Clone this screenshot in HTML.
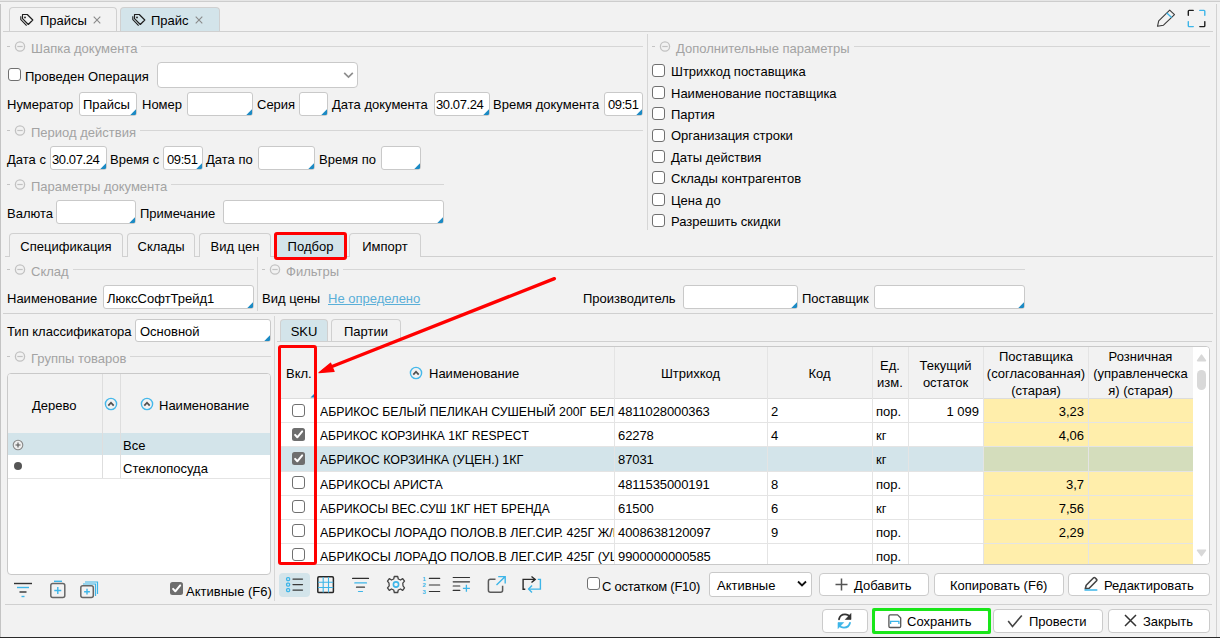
<!DOCTYPE html>
<html><head><meta charset="utf-8"><style>
html,body{margin:0;padding:0;}
body{width:1220px;height:638px;overflow:hidden;background:#f2f2f2;position:relative;font-family:"Liberation Sans",sans-serif;font-size:13px;color:#000;}
body>div,body>svg{position:absolute;}
.t{line-height:15px;white-space:nowrap;}
</style></head><body>
<div style="left:0px;top:1px;width:1220px;height:1px;background:#cdcdcd"></div>
<div style="left:0px;top:0px;width:1220px;height:1px;background:#e6e6e6"></div>
<div style="left:0px;top:4px;width:1px;height:633px;background:#c4c4c4"></div>
<div style="left:1216px;top:4px;width:1px;height:633px;background:#d2d2d2"></div>
<div style="left:0px;top:637px;width:1220px;height:1px;background:#2a2a2a"></div>
<div style="left:9px;top:7px;width:108px;height:25px;background:#f2f2f2;border:1px solid #d0d0d0;border-bottom:none;border-radius:4px 4px 0 0;box-sizing:border-box"></div>
<div style="left:120px;top:7px;width:100px;height:25px;background:#d3e4ea;border:1px solid #d0d0d0;border-bottom:none;border-radius:4px 4px 0 0;box-sizing:border-box"></div>
<div style="left:3px;top:31px;width:1210px;height:1px;background:#d0d0d0"></div>
<svg style="left:20px;top:13px" width="14" height="13" viewBox="0 0 14 13"><path d="M2.5 1.5 H7.3 L12.8 7 L8.3 11.5 L2.5 5.7 Z" fill="none" stroke="#1d1d1d" stroke-width="1.15" stroke-linejoin="round"/><path d="M0.8 3.2 V6.6 L6.6 12.6" fill="none" stroke="#1d1d1d" stroke-width="1.1"/><circle cx="5" cy="4.4" r="0.9" fill="#1d1d1d"/></svg>
<div class="t" style="left:40px;top:13px;">Прайсы</div>
<svg style="left:132px;top:13px" width="14" height="13" viewBox="0 0 14 13"><path d="M2.5 1.5 H7.3 L12.8 7 L8.3 11.5 L2.5 5.7 Z" fill="none" stroke="#1d1d1d" stroke-width="1.15" stroke-linejoin="round"/><path d="M0.8 3.2 V6.6 L6.6 12.6" fill="none" stroke="#1d1d1d" stroke-width="1.1"/><circle cx="5" cy="4.4" r="0.9" fill="#1d1d1d"/></svg>
<div class="t" style="left:151px;top:13px;">Прайс</div>
<svg style="left:93px;top:16px" width="8" height="8" viewBox="0 0 8 8"><path d="M0.7 0.7 L7.3 7.3 M7.3 0.7 L0.7 7.3" stroke="#8a8a8a" stroke-width="1.1"/></svg>
<svg style="left:195px;top:16px" width="8" height="8" viewBox="0 0 8 8"><path d="M0.7 0.7 L7.3 7.3 M7.3 0.7 L0.7 7.3" stroke="#8a8a8a" stroke-width="1.1"/></svg>
<svg style="left:1150px;top:5px" width="30" height="25" viewBox="0 0 30 25"><path d="M7.5 21.3 L8.7 15.8 L19.7 5.2 L24.5 9.6 L13.5 20.2 Z" fill="none" stroke="#3a3a3a" stroke-width="1.1" stroke-linejoin="round"/><path d="M16.8 7.9 L21.6 12.6" stroke="#3db5e8" stroke-width="1.4"/></svg>
<svg style="left:1185px;top:5px" width="25" height="25" viewBox="0 0 25 25"><g fill="none" stroke-width="1.4" stroke-linecap="round" stroke-linejoin="round"><path d="M3.3 10.2 V6.2 Q3.3 5.4 4.1 5.4 H8.2" stroke="#1e1e1e"/><path d="M14.8 5.4 H19 Q19.8 5.4 19.8 6.2 V10.3" stroke="#3db5e8"/><path d="M3.3 16.6 V20.8 Q3.3 21.6 4.1 21.6 H8.3" stroke="#3db5e8"/><path d="M14.8 21.6 H19 Q19.8 21.6 19.8 20.8 V16.6" stroke="#1e1e1e"/></g></svg>
<div style="left:7px;top:46px;width:3px;height:1px;background:#c4c4c4"></div>
<svg style="left:14px;top:41px" width="12" height="12" viewBox="0 0 12 12"><circle cx="6" cy="5.5" r="4.6" fill="none" stroke="#c2c2c2" stroke-width="1.3"/><line x1="3.3" y1="5.5" x2="8.7" y2="5.5" stroke="#c2c2c2" stroke-width="1.2"/></svg>
<div class="t" style="left:31px;top:41px;color:#a3a3a3">Шапка документа</div>
<div style="left:141px;top:46px;width:502px;height:1px;background:#d6d6d6"></div>
<div style="left:8px;top:68px;width:13px;height:13px;background:#fff;border:1.2px solid #707070;border-radius:3px;box-sizing:border-box"></div>
<div class="t" style="left:25px;top:69px;">Проведен Операция</div>
<div style="left:157px;top:62px;width:201px;height:26px;background:#fff;border:1px solid #c9c9c9;border-radius:4px;box-sizing:border-box"></div>
<svg style="left:343px;top:71px" width="11" height="8" viewBox="0 0 11 8"><path d="M1.2 1.8 L5.5 6 L9.8 1.8" fill="none" stroke="#8e8e8e" stroke-width="1.7"/></svg>
<div class="t" style="left:7px;top:97px;">Нумератор</div>
<div style="left:79px;top:92px;width:58px;height:24px;background:#fff;border:1px solid #c9c9c9;border-radius:3px;box-sizing:border-box"></div>
<svg style="left:129px;top:108px" width="8" height="8" viewBox="0 0 8 8"><path d="M7 1.3 L7 5.8 Q7 7 5.8 7 L1.3 7 Z" fill="#1b8ac4"/></svg>
<div class="t" style="left:83px;top:97px;">Прайсы</div>
<div class="t" style="left:142px;top:97px;">Номер</div>
<div style="left:187px;top:92px;width:66px;height:24px;background:#fff;border:1px solid #c9c9c9;border-radius:3px;box-sizing:border-box"></div>
<svg style="left:245px;top:108px" width="8" height="8" viewBox="0 0 8 8"><path d="M7 1.3 L7 5.8 Q7 7 5.8 7 L1.3 7 Z" fill="#1b8ac4"/></svg>
<div class="t" style="left:257px;top:97px;">Серия</div>
<div style="left:299px;top:92px;width:29px;height:24px;background:#fff;border:1px solid #c9c9c9;border-radius:3px;box-sizing:border-box"></div>
<svg style="left:320px;top:108px" width="8" height="8" viewBox="0 0 8 8"><path d="M7 1.3 L7 5.8 Q7 7 5.8 7 L1.3 7 Z" fill="#1b8ac4"/></svg>
<div class="t" style="left:332px;top:97px;">Дата документа</div>
<div style="left:434px;top:92px;width:56px;height:24px;background:#fff;border:1px solid #c9c9c9;border-radius:3px;box-sizing:border-box"></div>
<svg style="left:482px;top:108px" width="8" height="8" viewBox="0 0 8 8"><path d="M7 1.3 L7 5.8 Q7 7 5.8 7 L1.3 7 Z" fill="#1b8ac4"/></svg>
<div class="t" style="left:436px;top:97px;letter-spacing:-0.4px">30.07.24</div>
<div class="t" style="left:493px;top:97px;">Время документа</div>
<div style="left:604px;top:92px;width:39px;height:24px;background:#fff;border:1px solid #c9c9c9;border-radius:3px;box-sizing:border-box"></div>
<svg style="left:635px;top:108px" width="8" height="8" viewBox="0 0 8 8"><path d="M7 1.3 L7 5.8 Q7 7 5.8 7 L1.3 7 Z" fill="#1b8ac4"/></svg>
<div class="t" style="left:608px;top:97px;letter-spacing:-0.4px">09:51</div>
<div style="left:7px;top:130px;width:3px;height:1px;background:#c4c4c4"></div>
<svg style="left:14px;top:125px" width="12" height="12" viewBox="0 0 12 12"><circle cx="6" cy="5.5" r="4.6" fill="none" stroke="#c2c2c2" stroke-width="1.3"/><line x1="3.3" y1="5.5" x2="8.7" y2="5.5" stroke="#c2c2c2" stroke-width="1.2"/></svg>
<div class="t" style="left:31px;top:125px;color:#a3a3a3">Период действия</div>
<div style="left:140px;top:130px;width:503px;height:1px;background:#d6d6d6"></div>
<div class="t" style="left:7px;top:152px;">Дата с</div>
<div style="left:50px;top:146px;width:57px;height:24px;background:#fff;border:1px solid #c9c9c9;border-radius:3px;box-sizing:border-box"></div>
<svg style="left:99px;top:162px" width="8" height="8" viewBox="0 0 8 8"><path d="M7 1.3 L7 5.8 Q7 7 5.8 7 L1.3 7 Z" fill="#1b8ac4"/></svg>
<div class="t" style="left:52px;top:152px;letter-spacing:-0.4px">30.07.24</div>
<div class="t" style="left:110px;top:152px;">Время с</div>
<div style="left:163px;top:146px;width:40px;height:24px;background:#fff;border:1px solid #c9c9c9;border-radius:3px;box-sizing:border-box"></div>
<svg style="left:195px;top:162px" width="8" height="8" viewBox="0 0 8 8"><path d="M7 1.3 L7 5.8 Q7 7 5.8 7 L1.3 7 Z" fill="#1b8ac4"/></svg>
<div class="t" style="left:167px;top:152px;letter-spacing:-0.4px">09:51</div>
<div class="t" style="left:206px;top:152px;">Дата по</div>
<div style="left:258px;top:146px;width:57px;height:24px;background:#fff;border:1px solid #c9c9c9;border-radius:3px;box-sizing:border-box"></div>
<svg style="left:307px;top:162px" width="8" height="8" viewBox="0 0 8 8"><path d="M7 1.3 L7 5.8 Q7 7 5.8 7 L1.3 7 Z" fill="#1b8ac4"/></svg>
<div class="t" style="left:319px;top:152px;">Время по</div>
<div style="left:381px;top:146px;width:40px;height:24px;background:#fff;border:1px solid #c9c9c9;border-radius:3px;box-sizing:border-box"></div>
<svg style="left:413px;top:162px" width="8" height="8" viewBox="0 0 8 8"><path d="M7 1.3 L7 5.8 Q7 7 5.8 7 L1.3 7 Z" fill="#1b8ac4"/></svg>
<div style="left:7px;top:184px;width:3px;height:1px;background:#c4c4c4"></div>
<svg style="left:14px;top:179px" width="12" height="12" viewBox="0 0 12 12"><circle cx="6" cy="5.5" r="4.6" fill="none" stroke="#c2c2c2" stroke-width="1.3"/><line x1="3.3" y1="5.5" x2="8.7" y2="5.5" stroke="#c2c2c2" stroke-width="1.2"/></svg>
<div class="t" style="left:31px;top:179px;color:#a3a3a3">Параметры документа</div>
<div style="left:171px;top:184px;width:273px;height:1px;background:#d6d6d6"></div>
<div class="t" style="left:7px;top:206px;">Валюта</div>
<div style="left:56px;top:200px;width:80px;height:24px;background:#fff;border:1px solid #c9c9c9;border-radius:3px;box-sizing:border-box"></div>
<svg style="left:128px;top:216px" width="8" height="8" viewBox="0 0 8 8"><path d="M7 1.3 L7 5.8 Q7 7 5.8 7 L1.3 7 Z" fill="#1b8ac4"/></svg>
<div class="t" style="left:140px;top:206px;">Примечание</div>
<div style="left:223px;top:200px;width:221px;height:24px;background:#fff;border:1px solid #c9c9c9;border-radius:3px;box-sizing:border-box"></div>
<svg style="left:436px;top:216px" width="8" height="8" viewBox="0 0 8 8"><path d="M7 1.3 L7 5.8 Q7 7 5.8 7 L1.3 7 Z" fill="#1b8ac4"/></svg>
<div style="left:647px;top:34px;width:1px;height:196px;background:#d6d6d6"></div>
<div style="left:652px;top:46px;width:3px;height:1px;background:#c4c4c4"></div>
<svg style="left:659px;top:41px" width="12" height="12" viewBox="0 0 12 12"><circle cx="6" cy="5.5" r="4.6" fill="none" stroke="#c2c2c2" stroke-width="1.3"/><line x1="3.3" y1="5.5" x2="8.7" y2="5.5" stroke="#c2c2c2" stroke-width="1.2"/></svg>
<div class="t" style="left:676px;top:41px;color:#a3a3a3">Дополнительные параметры</div>
<div style="left:854px;top:46px;width:356px;height:1px;background:#d6d6d6"></div>
<div style="left:652px;top:64px;width:13px;height:13px;background:#fff;border:1.2px solid #707070;border-radius:3px;box-sizing:border-box"></div>
<div class="t" style="left:671px;top:64px;">Штрихкод поставщика</div>
<div style="left:652px;top:86px;width:13px;height:13px;background:#fff;border:1.2px solid #707070;border-radius:3px;box-sizing:border-box"></div>
<div class="t" style="left:671px;top:86px;">Наименование поставщика</div>
<div style="left:652px;top:107px;width:13px;height:13px;background:#fff;border:1.2px solid #707070;border-radius:3px;box-sizing:border-box"></div>
<div class="t" style="left:671px;top:107px;">Партия</div>
<div style="left:652px;top:129px;width:13px;height:13px;background:#fff;border:1.2px solid #707070;border-radius:3px;box-sizing:border-box"></div>
<div class="t" style="left:671px;top:128px;">Организация строки</div>
<div style="left:652px;top:150px;width:13px;height:13px;background:#fff;border:1.2px solid #707070;border-radius:3px;box-sizing:border-box"></div>
<div class="t" style="left:671px;top:150px;">Даты действия</div>
<div style="left:652px;top:171px;width:13px;height:13px;background:#fff;border:1.2px solid #707070;border-radius:3px;box-sizing:border-box"></div>
<div class="t" style="left:671px;top:171px;">Склады контрагентов</div>
<div style="left:652px;top:193px;width:13px;height:13px;background:#fff;border:1.2px solid #707070;border-radius:3px;box-sizing:border-box"></div>
<div class="t" style="left:671px;top:193px;">Цена до</div>
<div style="left:652px;top:214px;width:13px;height:13px;background:#fff;border:1.2px solid #707070;border-radius:3px;box-sizing:border-box"></div>
<div class="t" style="left:671px;top:214px;">Разрешить скидки</div>
<div style="left:5px;top:256px;width:1208px;height:1px;background:#d0d0d0"></div>
<div style="left:9px;top:233px;width:114px;height:24px;background:#f2f2f2;border:1px solid #d0d0d0;border-bottom:none;border-radius:4px 4px 0 0;box-sizing:border-box"></div>
<div class="t" style="left:9px;width:114px;text-align:center;top:239px;">Спецификация</div>
<div style="left:127px;top:233px;width:68px;height:24px;background:#f2f2f2;border:1px solid #d0d0d0;border-bottom:none;border-radius:4px 4px 0 0;box-sizing:border-box"></div>
<div class="t" style="left:127px;width:68px;text-align:center;top:239px;">Склады</div>
<div style="left:199px;top:233px;width:72px;height:24px;background:#f2f2f2;border:1px solid #d0d0d0;border-bottom:none;border-radius:4px 4px 0 0;box-sizing:border-box"></div>
<div class="t" style="left:199px;width:72px;text-align:center;top:239px;">Вид цен</div>
<div style="left:276px;top:233px;width:69px;height:24px;background:#d3e4ea;border:1px solid #d0d0d0;border-bottom:none;border-radius:4px 4px 0 0;box-sizing:border-box"></div>
<div style="left:349px;top:233px;width:72px;height:24px;background:#f2f2f2;border:1px solid #d0d0d0;border-bottom:none;border-radius:4px 4px 0 0;box-sizing:border-box"></div>
<div class="t" style="left:349px;width:72px;text-align:center;top:239px;">Импорт</div>
<div class="t" style="left:277px;width:67px;text-align:center;top:239px;">Подбор</div>
<div style="left:274px;top:232px;width:73px;height:28px;border:3px solid #ff0000;border-radius:3px;box-sizing:border-box"></div>
<div style="left:7px;top:269px;width:3px;height:1px;background:#c4c4c4"></div>
<svg style="left:14px;top:264px" width="12" height="12" viewBox="0 0 12 12"><circle cx="6" cy="5.5" r="4.6" fill="none" stroke="#c2c2c2" stroke-width="1.3"/><line x1="3.3" y1="5.5" x2="8.7" y2="5.5" stroke="#c2c2c2" stroke-width="1.2"/></svg>
<div class="t" style="left:31px;top:264px;color:#a3a3a3">Склад</div>
<div style="left:73px;top:269px;width:181px;height:1px;background:#d6d6d6"></div>
<div style="left:257px;top:257px;width:1px;height:54px;background:#d6d6d6"></div>
<div style="left:262px;top:269px;width:3px;height:1px;background:#c4c4c4"></div>
<svg style="left:269px;top:264px" width="12" height="12" viewBox="0 0 12 12"><circle cx="6" cy="5.5" r="4.6" fill="none" stroke="#c2c2c2" stroke-width="1.3"/><line x1="3.3" y1="5.5" x2="8.7" y2="5.5" stroke="#c2c2c2" stroke-width="1.2"/></svg>
<div class="t" style="left:286px;top:264px;color:#a3a3a3">Фильтры</div>
<div style="left:343px;top:269px;width:682px;height:1px;background:#d6d6d6"></div>
<div class="t" style="left:7px;top:291px;">Наименование</div>
<div style="left:103px;top:285px;width:151px;height:24px;background:#fff;border:1px solid #c9c9c9;border-radius:3px;box-sizing:border-box"></div>
<svg style="left:246px;top:301px" width="8" height="8" viewBox="0 0 8 8"><path d="M7 1.3 L7 5.8 Q7 7 5.8 7 L1.3 7 Z" fill="#1b8ac4"/></svg>
<div class="t" style="left:107px;top:291px;">ЛюксСофтТрейд1</div>
<div class="t" style="left:262px;top:291px;">Вид цены</div>
<div class="t" style="left:328px;top:291px;color:#5aafd8;text-decoration:underline">Не определено</div>
<div class="t" style="left:583px;top:291px;">Производитель</div>
<div style="left:683px;top:285px;width:115px;height:24px;background:#fff;border:1px solid #c9c9c9;border-radius:3px;box-sizing:border-box"></div>
<svg style="left:790px;top:301px" width="8" height="8" viewBox="0 0 8 8"><path d="M7 1.3 L7 5.8 Q7 7 5.8 7 L1.3 7 Z" fill="#1b8ac4"/></svg>
<div class="t" style="left:802px;top:291px;">Поставщик</div>
<div style="left:874px;top:285px;width:151px;height:24px;background:#fff;border:1px solid #c9c9c9;border-radius:3px;box-sizing:border-box"></div>
<svg style="left:1017px;top:301px" width="8" height="8" viewBox="0 0 8 8"><path d="M7 1.3 L7 5.8 Q7 7 5.8 7 L1.3 7 Z" fill="#1b8ac4"/></svg>
<div style="left:3px;top:313px;width:1210px;height:1px;background:#d0d0d0"></div>
<div class="t" style="left:7px;top:324px;">Тип классификатора</div>
<div style="left:135px;top:319px;width:136px;height:23px;background:#fff;border:1px solid #c9c9c9;border-radius:3px;box-sizing:border-box"></div>
<svg style="left:263px;top:334px" width="8" height="8" viewBox="0 0 8 8"><path d="M7 1.3 L7 5.8 Q7 7 5.8 7 L1.3 7 Z" fill="#1b8ac4"/></svg>
<div class="t" style="left:140px;top:324px;">Основной</div>
<div style="left:274px;top:316px;width:1px;height:285px;background:#d6d6d6"></div>
<div style="left:7px;top:356px;width:3px;height:1px;background:#c4c4c4"></div>
<svg style="left:14px;top:351px" width="12" height="12" viewBox="0 0 12 12"><circle cx="6" cy="5.5" r="4.6" fill="none" stroke="#c2c2c2" stroke-width="1.3"/><line x1="3.3" y1="5.5" x2="8.7" y2="5.5" stroke="#c2c2c2" stroke-width="1.2"/></svg>
<div class="t" style="left:31px;top:351px;color:#a3a3a3">Группы товаров</div>
<div style="left:130px;top:356px;width:141px;height:1px;background:#d6d6d6"></div>
<div style="left:7px;top:373px;width:264px;height:202px;background:#fff;border:1px solid #c9c9c9;border-radius:4px;box-sizing:border-box"></div>
<div style="left:8px;top:374px;width:262px;height:59px;background:#f2f2f2;border-radius:3px 3px 0 0"></div>
<div style="left:8px;top:433px;width:262px;height:22px;background:#d3e4ea"></div>
<div style="left:8px;top:478px;width:262px;height:1px;background:#e4e4e4"></div>
<div style="left:102px;top:374px;width:1px;height:104px;background:#dedede"></div>
<div style="left:120px;top:374px;width:1px;height:104px;background:#dedede"></div>
<div class="t" style="left:32px;top:398px;">Дерево</div>
<svg style="left:104px;top:396.5px" width="14" height="14" viewBox="0 0 14 14"><circle cx="7" cy="7" r="5.6" fill="none" stroke="#45b8ea" stroke-width="1.4"/><path d="M4.3 8.6 L7 5.7 L9.7 8.6" fill="none" stroke="#505050" stroke-width="1.75"/></svg>
<svg style="left:139.5px;top:396.5px" width="14" height="14" viewBox="0 0 14 14"><circle cx="7" cy="7" r="5.6" fill="none" stroke="#45b8ea" stroke-width="1.4"/><path d="M4.3 8.6 L7 5.7 L9.7 8.6" fill="none" stroke="#505050" stroke-width="1.75"/></svg>
<div class="t" style="left:159px;top:398px;">Наименование</div>
<svg style="left:12px;top:439px" width="12" height="12" viewBox="0 0 12 12"><circle cx="6" cy="6" r="4.8" fill="#eee" stroke="#888" stroke-width="1.1"/><path d="M3.5 6 H8.5 M6 3.5 V8.5" stroke="#555" stroke-width="1.1"/></svg>
<div class="t" style="left:123px;top:438px;">Все</div>
<svg style="left:13px;top:461px" width="10" height="10" viewBox="0 0 10 10"><circle cx="5" cy="5" r="4" fill="#555"/></svg>
<div class="t" style="left:123px;top:461px;">Стеклопосуда</div>
<svg style="left:13px;top:582px" width="20" height="17" viewBox="0 0 20 17"><path d="M1 1.5 H19" stroke="#333" stroke-width="1.4"/><path d="M4 5.5 H16" stroke="#3db5e8" stroke-width="1.4"/><path d="M6.5 10 H13.5" stroke="#333" stroke-width="1.4"/><path d="M8.5 14.5 H11.5" stroke="#3db5e8" stroke-width="1.4"/></svg>
<svg style="left:49px;top:580px" width="18" height="19" viewBox="0 0 18 19"><path d="M5 1.3 H13" stroke="#3db5e8" stroke-width="1.4"/><rect x="1.8" y="3.5" width="14" height="14" rx="2" fill="none" stroke="#666" stroke-width="1.5"/><path d="M8.8 7 V14 M5.3 10.5 H12.3" stroke="#3db5e8" stroke-width="1.4"/></svg>
<svg style="left:79px;top:580px" width="21" height="19" viewBox="0 0 21 19"><path d="M6 2 H18.5 V14" fill="none" stroke="#3db5e8" stroke-width="1.2"/><path d="M4 4 H16.5 V16" fill="none" stroke="#3db5e8" stroke-width="1.2"/><rect x="1.8" y="5.8" width="12.5" height="11.8" rx="2" fill="#f2f2f2" stroke="#666" stroke-width="1.5"/><path d="M8 8.8 V14.6 M5.1 11.7 H10.9" stroke="#3db5e8" stroke-width="1.4"/></svg>
<div style="left:170px;top:582px;width:13px;height:13px;background:#6e6e6e;border-radius:2.5px"></div>
<svg style="left:170px;top:582px" width="13" height="13" viewBox="0 0 13 13"><path d="M3.1 6.9 L5.3 9.3 L10.2 3.4" fill="none" stroke="#fff" stroke-width="2" stroke-linecap="round" stroke-linejoin="round"/></svg>
<div class="t" style="left:186px;top:584px;">Активные (F6)</div>
<div style="left:280px;top:319px;width:48px;height:23px;background:#d3e4ea;border:1px solid #d0d0d0;border-bottom:none;border-radius:4px 4px 0 0;box-sizing:border-box"></div>
<div class="t" style="left:280px;width:48px;text-align:center;top:324px;">SKU</div>
<div style="left:331px;top:319px;width:70px;height:23px;background:#f2f2f2;border:1px solid #d0d0d0;border-bottom:none;border-radius:4px 4px 0 0;box-sizing:border-box"></div>
<div class="t" style="left:331px;width:70px;text-align:center;top:324px;">Партии</div>
<div style="left:277px;top:341px;width:935px;height:1px;background:#d0d0d0"></div>
<div style="left:278px;top:346px;width:932px;height:219px;background:#fff;border:1px solid #c9c9c9;border-radius:4px;box-sizing:border-box;overflow:hidden"></div>
<div style="left:279px;top:347px;width:914px;height:51px;background:#f2f2f2;border-radius:3px 0 0 0"></div>
<div style="left:279px;top:398px;width:914px;height:1px;background:#dcdcdc"></div>
<div style="left:984px;top:399px;width:209px;height:165px;background:#ffeeab"></div>
<div style="left:279px;top:446.9px;width:706px;height:24.2px;background:#d3e4ea"></div>
<div style="left:984px;top:446.9px;width:209px;height:24.2px;background:#d4ddbc"></div>
<div style="left:279px;top:422.2px;width:914px;height:1px;background:#e4e4e4"></div>
<div style="left:279px;top:446.4px;width:914px;height:1px;background:#e4e4e4"></div>
<div style="left:279px;top:470.6px;width:914px;height:1px;background:#e4e4e4"></div>
<div style="left:279px;top:494.8px;width:914px;height:1px;background:#e4e4e4"></div>
<div style="left:279px;top:519.0px;width:914px;height:1px;background:#e4e4e4"></div>
<div style="left:279px;top:543.2px;width:914px;height:1px;background:#e4e4e4"></div>
<div style="left:315px;top:347px;width:1px;height:217px;background:#e4e4e4"></div>
<div style="left:614px;top:347px;width:1px;height:217px;background:#e4e4e4"></div>
<div style="left:767px;top:347px;width:1px;height:217px;background:#e4e4e4"></div>
<div style="left:872px;top:347px;width:1px;height:217px;background:#e4e4e4"></div>
<div style="left:908px;top:347px;width:1px;height:217px;background:#e4e4e4"></div>
<div style="left:983px;top:347px;width:1px;height:217px;background:#e4e4e4"></div>
<div style="left:1088px;top:347px;width:1px;height:217px;background:#e4e4e4"></div>
<div class="t" style="left:286px;top:366px;">Вкл.</div>
<svg style="left:409px;top:366px" width="14" height="14" viewBox="0 0 14 14"><circle cx="7" cy="7" r="5.6" fill="none" stroke="#45b8ea" stroke-width="1.4"/><path d="M4.3 8.6 L7 5.7 L9.7 8.6" fill="none" stroke="#505050" stroke-width="1.75"/></svg>
<div class="t" style="left:429px;top:366px;">Наименование</div>
<div class="t" style="left:614px;width:153px;text-align:center;top:366px;">Штрихкод</div>
<div class="t" style="left:767px;width:105px;text-align:center;top:366px;">Код</div>
<div class="t" style="left:872px;width:36px;text-align:center;top:357.5px;">Ед.</div>
<div class="t" style="left:872px;width:36px;text-align:center;top:374.5px;">изм.</div>
<div class="t" style="left:908px;width:75px;text-align:center;top:357.5px;">Текущий</div>
<div class="t" style="left:908px;width:75px;text-align:center;top:374.5px;">остаток</div>
<div class="t" style="left:984px;width:104px;text-align:center;top:349px;">Поставщика</div>
<div class="t" style="left:984px;width:104px;text-align:center;top:366px;">(согласованная)</div>
<div class="t" style="left:984px;width:104px;text-align:center;top:383px;">(старая)</div>
<div class="t" style="left:1088px;width:105px;text-align:center;top:349px;">Розничная</div>
<div class="t" style="left:1088px;width:105px;text-align:center;top:366px;">(управленческа</div>
<div class="t" style="left:1088px;width:105px;text-align:center;top:383px;">я) (старая)</div>
<svg style="left:310px;top:393px" width="5" height="5" viewBox="0 0 5 5"><path d="M4.5 0.5 V4.5 H0.5 Z" fill="#1b8ac4"/></svg>
<div style="left:292px;top:404px;width:13px;height:13px;background:#fff;border:1.2px solid #707070;border-radius:3px;box-sizing:border-box"></div>
<div class="t" style="left:320px;top:404px;width:294px;overflow:hidden"><span style="display:inline-block;transform:scaleX(0.946);transform-origin:0 0">АБРИКОС БЕЛЫЙ ПЕЛИКАН СУШЕНЫЙ 200Г БЕЛЫЙ</span></div>
<div class="t" style="left:618px;top:404px;letter-spacing:-0.1px">4811028000363</div>
<div class="t" style="left:771px;top:404px;">2</div>
<div class="t" style="left:876px;top:404px;">пор.</div>
<div class="t" style="left:679px;width:300px;text-align:right;top:404px;">1 099</div>
<div class="t" style="left:784px;width:300px;text-align:right;top:404px;">3,23</div>
<div style="left:292px;top:428px;width:13px;height:13px;background:#6e6e6e;border-radius:2.5px"></div>
<svg style="left:292px;top:428px" width="13" height="13" viewBox="0 0 13 13"><path d="M3.1 6.9 L5.3 9.3 L10.2 3.4" fill="none" stroke="#fff" stroke-width="2" stroke-linecap="round" stroke-linejoin="round"/></svg>
<div class="t" style="left:320px;top:428px;width:294px;overflow:hidden"><span style="display:inline-block;transform:scaleX(0.928);transform-origin:0 0">АБРИКОС КОРЗИНКА 1КГ RESPECT</span></div>
<div class="t" style="left:618px;top:428px;letter-spacing:-0.1px">62278</div>
<div class="t" style="left:771px;top:428px;">4</div>
<div class="t" style="left:876px;top:428px;">кг</div>
<div class="t" style="left:784px;width:300px;text-align:right;top:428px;">4,06</div>
<div style="left:292px;top:452px;width:13px;height:13px;background:#6e6e6e;border-radius:2.5px"></div>
<svg style="left:292px;top:452px" width="13" height="13" viewBox="0 0 13 13"><path d="M3.1 6.9 L5.3 9.3 L10.2 3.4" fill="none" stroke="#fff" stroke-width="2" stroke-linecap="round" stroke-linejoin="round"/></svg>
<div class="t" style="left:320px;top:452px;width:294px;overflow:hidden"><span style="display:inline-block;transform:scaleX(0.96);transform-origin:0 0">АБРИКОС КОРЗИНКА (УЦЕН.) 1КГ</span></div>
<div class="t" style="left:618px;top:452px;letter-spacing:-0.1px">87031</div>
<div class="t" style="left:771px;top:452px;"></div>
<div class="t" style="left:876px;top:452px;">кг</div>
<div style="left:292px;top:476px;width:13px;height:13px;background:#fff;border:1.2px solid #707070;border-radius:3px;box-sizing:border-box"></div>
<div class="t" style="left:320px;top:477px;width:294px;overflow:hidden"><span style="display:inline-block;transform:scaleX(0.951);transform-origin:0 0">АБРИКОСЫ АРИСТА</span></div>
<div class="t" style="left:618px;top:477px;letter-spacing:-0.1px">4811535000191</div>
<div class="t" style="left:771px;top:477px;">8</div>
<div class="t" style="left:876px;top:477px;">пор.</div>
<div class="t" style="left:784px;width:300px;text-align:right;top:477px;">3,7</div>
<div style="left:292px;top:500px;width:13px;height:13px;background:#fff;border:1.2px solid #707070;border-radius:3px;box-sizing:border-box"></div>
<div class="t" style="left:320px;top:501px;width:294px;overflow:hidden"><span style="display:inline-block;transform:scaleX(0.926);transform-origin:0 0">АБРИКОСЫ ВЕС.СУШ 1КГ НЕТ БРЕНДА</span></div>
<div class="t" style="left:618px;top:501px;letter-spacing:-0.1px">61500</div>
<div class="t" style="left:771px;top:501px;">6</div>
<div class="t" style="left:876px;top:501px;">кг</div>
<div class="t" style="left:784px;width:300px;text-align:right;top:501px;">7,56</div>
<div style="left:292px;top:524px;width:13px;height:13px;background:#fff;border:1.2px solid #707070;border-radius:3px;box-sizing:border-box"></div>
<div class="t" style="left:320px;top:525px;width:294px;overflow:hidden"><span style="display:inline-block;transform:scaleX(0.962);transform-origin:0 0">АБРИКОСЫ ЛОРАДО ПОЛОВ.В ЛЕГ.СИР. 425Г Ж/Б</span></div>
<div class="t" style="left:618px;top:525px;letter-spacing:-0.1px">4008638120097</div>
<div class="t" style="left:771px;top:525px;">9</div>
<div class="t" style="left:876px;top:525px;">пор.</div>
<div class="t" style="left:784px;width:300px;text-align:right;top:525px;">2,29</div>
<div style="left:292px;top:548px;width:13px;height:13px;background:#fff;border:1.2px solid #707070;border-radius:3px;box-sizing:border-box"></div>
<div class="t" style="left:320px;top:549px;width:294px;overflow:hidden"><span style="display:inline-block;transform:scaleX(0.962);transform-origin:0 0">АБРИКОСЫ ЛОРАДО ПОЛОВ.В ЛЕГ.СИР. 425Г (УЦЕН.)</span></div>
<div class="t" style="left:618px;top:549px;letter-spacing:-0.1px">9900000000585</div>
<div class="t" style="left:771px;top:549px;"></div>
<div class="t" style="left:876px;top:549px;">пор.</div>
<div style="left:1193px;top:347px;width:16px;height:217px;background:#fff;border-radius:0 3px 3px 0"></div>
<svg style="left:1195px;top:353px" width="13" height="10" viewBox="0 0 13 10"><path d="M2.6 7.6 L6.5 2.2 L10.4 7.6 Z" fill="#d8d8d8" stroke="#d8d8d8" stroke-width="1.6" stroke-linejoin="round"/></svg>
<div style="left:1197px;top:370px;width:9px;height:20px;background:#d9d9d9;border-radius:4.5px"></div>
<svg style="left:1195px;top:548px" width="13" height="10" viewBox="0 0 13 10"><path d="M2.6 2.2 L6.5 7.6 L10.4 2.2 Z" fill="#d8d8d8" stroke="#d8d8d8" stroke-width="1.6" stroke-linejoin="round"/></svg>
<div style="left:278px;top:345px;width:39px;height:220px;border:3px solid #ff0000;border-radius:3px;box-sizing:border-box"></div>
<svg style="left:300px;top:260px" width="270" height="130" viewBox="0 0 270 130"><line x1="254.4" y1="18.6" x2="32" y2="106.5" stroke="#ff0000" stroke-width="3.3" stroke-linecap="round"/><path d="M19 112.6 L30.6 103.2 L34.1 111.4 Z" fill="#ff0000" stroke="#ff0000" stroke-width="1.2" stroke-linejoin="round"/></svg>
<div style="left:279px;top:573px;width:31px;height:24px;background:#d3e4ea;border-radius:4px"></div>
<svg style="left:282px;top:572px" width="24" height="22" viewBox="0 0 24 22"><g fill="none" stroke="#3db5e8" stroke-width="1.3"><rect x="4.6" y="5.6" width="3" height="3" rx="1"/><rect x="4.6" y="11.1" width="3" height="3" rx="1"/><rect x="4.6" y="16.6" width="3" height="3" rx="1"/></g><path d="M11 7.1 H20.5 M11 12.6 H20.5 M11 18.1 H20.5" stroke="#3a3a3a" stroke-width="1.3" stroke-linecap="round"/></svg>
<svg style="left:314px;top:573px" width="22" height="22" viewBox="0 0 22 22"><rect x="3.8" y="3.8" width="15.6" height="15.8" rx="1.2" fill="none" stroke="#262626" stroke-width="1.5"/><path d="M9.2 4 V19.4 M14.5 4 V19.4 M4 9.2 H19.2 M4 14.5 H19.2" stroke="#3db5e8" stroke-width="1.1"/></svg>
<svg style="left:350px;top:573px" width="22" height="22" viewBox="0 0 22 22"><path d="M2.6 5.4 H18.5" stroke="#2e2e2e" stroke-width="1.2" stroke-linecap="round"/><path d="M4.8 9.9 H16.5" stroke="#3db5e8" stroke-width="1.2" stroke-linecap="round"/><path d="M6.5 14.2 H14.5" stroke="#3a3a3a" stroke-width="1.2" stroke-linecap="round"/><path d="M8.5 18.5 H12.5" stroke="#3db5e8" stroke-width="1.2" stroke-linecap="round"/></svg>
<svg style="left:386px;top:575px" width="20" height="19" viewBox="0 0 20 19"><path d="M8.3 1.5 H11.7 L12.3 4 L14.5 5 L16.7 3.6 L18.5 6.2 L16.8 8.2 L17 10.8 L18.5 12.8 L16.7 15.4 L14.5 14 L12.3 15 L11.7 17.5 H8.3 L7.7 15 L5.5 14 L3.3 15.4 L1.5 12.8 L3.2 10.8 L3 8.2 L1.5 6.2 L3.3 3.6 L5.5 5 L7.7 4 Z" fill="none" stroke="#444" stroke-width="1.3" stroke-linejoin="round"/><circle cx="10" cy="9.5" r="2.6" fill="none" stroke="#3db5e8" stroke-width="1.6"/></svg>
<svg style="left:420px;top:573px" width="22" height="22" viewBox="0 0 22 22"><path d="M9.4 5.4 H19.7 M9.4 12 H19.7 M9.4 18.5 H19.7" stroke="#333" stroke-width="1.2" stroke-linecap="round"/><text x="2.6" y="7.6" font-size="6" font-weight="bold" fill="#3db5e8" font-family="Liberation Sans">1</text><text x="2.6" y="14.2" font-size="6" font-weight="bold" fill="#3db5e8" font-family="Liberation Sans">2</text><text x="2.6" y="20.8" font-size="6" font-weight="bold" fill="#3db5e8" font-family="Liberation Sans">3</text></svg>
<svg style="left:450px;top:573px" width="22" height="22" viewBox="0 0 22 22"><path d="M3.2 4.5 H19.5 M3.2 8.8 H19.5 M3.2 13 H9.8 M3.2 17.4 H9.8" stroke="#333" stroke-width="1.2" stroke-linecap="round"/><path d="M16.4 11.8 V18.8 M12.9 15.3 H19.9" stroke="#3db5e8" stroke-width="1.3"/></svg>
<svg style="left:485px;top:573px" width="22" height="22" viewBox="0 0 22 22"><path d="M10.5 6.2 H5.4 Q3.4 6.2 3.4 8.2 V17.3 Q3.4 19.3 5.4 19.3 H15.6 Q17.6 19.3 17.6 17.3 V12.7" fill="none" stroke="#5a5a5a" stroke-width="1.5"/><path d="M11.5 12 L20.2 3.6 M13.2 3.6 H20.2 V10.6" fill="none" stroke="#3db5e8" stroke-width="1.4"/></svg>
<svg style="left:519px;top:573px" width="24" height="22" viewBox="0 0 24 22"><path d="M6.3 16.3 H4.1 V6.4 H16.2" fill="none" stroke="#2a2a2a" stroke-width="1.4"/><path d="M12.5 3.5 L16.2 6.4 L12.5 9.5" fill="none" stroke="#2a2a2a" stroke-width="1.4"/><path d="M18.8 6.4 H21.4 V16.1 H9.6" fill="none" stroke="#3db5e8" stroke-width="1.4"/><path d="M13 12.5 L9.6 16.1 L13 19.5" fill="none" stroke="#3db5e8" stroke-width="1.4"/></svg>
<div style="left:587px;top:577px;width:13px;height:13px;background:#fff;border:1.2px solid #707070;border-radius:3px;box-sizing:border-box"></div>
<div class="t" style="left:602px;top:579px;letter-spacing:-0.25px">С остатком (F10)</div>
<div style="left:709px;top:572px;width:103px;height:25px;background:#fff;border:1px solid #c9c9c9;border-radius:3px;box-sizing:border-box"></div>
<div class="t" style="left:717px;top:578px;">Активные</div>
<svg style="left:797px;top:580px" width="10" height="8" viewBox="0 0 10 8"><path d="M1 1.5 L5 5.5 L9 1.5" fill="none" stroke="#111" stroke-width="1.8"/></svg>
<div style="left:819px;top:573px;width:110px;height:23px;background:#fff;border:1px solid #cbcbcb;border-radius:4px;box-sizing:border-box"></div>
<svg style="left:835px;top:578px" width="13" height="13" viewBox="0 0 13 13"><path d="M6.5 0.5 V12.5 M0.5 6.5 H12.5" stroke="#555" stroke-width="1.5"/></svg>
<div class="t" style="left:854px;top:578px;">Добавить</div>
<div style="left:934px;top:573px;width:130px;height:23px;background:#fff;border:1px solid #cbcbcb;border-radius:4px;box-sizing:border-box"></div>
<div class="t" style="left:950px;top:578px;">Копировать (F6)</div>
<div style="left:1068px;top:573px;width:142px;height:23px;background:#fff;border:1px solid #cbcbcb;border-radius:4px;box-sizing:border-box"></div>
<svg style="left:1080px;top:574px" width="22" height="20" viewBox="0 0 22 20"><path d="M5.3 14.6 L6.2 11.2 L13.6 3.8 Q14.3 3.1 15 3.8 L16.6 5.4 Q17.3 6.1 16.6 6.8 L9.2 14.2 Z" fill="none" stroke="#444" stroke-width="1.6" stroke-linejoin="round"/><path d="M5 16.1 H16.8" stroke="#3db5e8" stroke-width="1.5" stroke-linecap="round"/></svg>
<div class="t" style="left:1104px;top:578px;">Редактировать</div>
<div style="left:5px;top:604px;width:1207px;height:1px;background:#d0d0d0"></div>
<div style="left:822px;top:609px;width:46px;height:24px;background:#fff;border:1px solid #cbcbcb;border-radius:4px;box-sizing:border-box"></div>
<svg style="left:830px;top:610px" width="30" height="22" viewBox="0 0 30 22"><path d="M9 9.3 Q10 4.4 15 4.4 Q18.3 4.4 20 7" fill="none" stroke="#333" stroke-width="1.8" stroke-linecap="round"/><path d="M21 3.5 V9.5 H15.3 Z" fill="#333" stroke="#333" stroke-width="0.6" stroke-linejoin="round"/><path d="M20 12.8 Q19 17.6 14 17.6 Q10.7 17.6 9 15" fill="none" stroke="#3db5e8" stroke-width="1.8" stroke-linecap="round"/><path d="M8 18.5 V12.5 H13.7 Z" fill="#3db5e8" stroke="#3db5e8" stroke-width="0.6" stroke-linejoin="round"/></svg>
<div style="left:874px;top:609px;width:115px;height:24px;background:#fff;border:1px solid #cbcbcb;border-radius:4px;box-sizing:border-box"></div>
<svg style="left:884px;top:610px" width="22" height="22" viewBox="0 0 22 22"><path d="M4.9 6.2 Q4.9 4.9 6.2 4.9 H13.6 L16.7 8 V16.2 Q16.7 17.5 15.4 17.5 H6.2 Q4.9 17.5 4.9 16.2 Z" fill="none" stroke="#555" stroke-width="1.3" stroke-linejoin="round"/><path d="M6.6 14 V11.3 H14.9 V14" fill="none" stroke="#3db5e8" stroke-width="1.3"/></svg>
<div class="t" style="left:907px;top:614px;">Сохранить</div>
<div style="left:872px;top:608px;width:119px;height:26px;border:3px solid #19e619;border-radius:2px;box-sizing:border-box"></div>
<div style="left:993px;top:609px;width:110px;height:24px;background:#fff;border:1px solid #cbcbcb;border-radius:4px;box-sizing:border-box"></div>
<svg style="left:1007px;top:614px" width="16" height="14" viewBox="0 0 16 14"><path d="M1.2 7 L5.5 12.5 L14.8 1.5" fill="none" stroke="#444" stroke-width="1.6"/></svg>
<div class="t" style="left:1029px;top:614px;">Провести</div>
<div style="left:1108px;top:609px;width:102px;height:24px;background:#fff;border:1px solid #cbcbcb;border-radius:4px;box-sizing:border-box"></div>
<svg style="left:1124px;top:614px" width="13" height="13" viewBox="0 0 13 13"><path d="M1 1 L12 12 M12 1 L1 12" stroke="#333" stroke-width="1.5"/></svg>
<div class="t" style="left:1143px;top:614px;">Закрыть</div>
</body></html>
